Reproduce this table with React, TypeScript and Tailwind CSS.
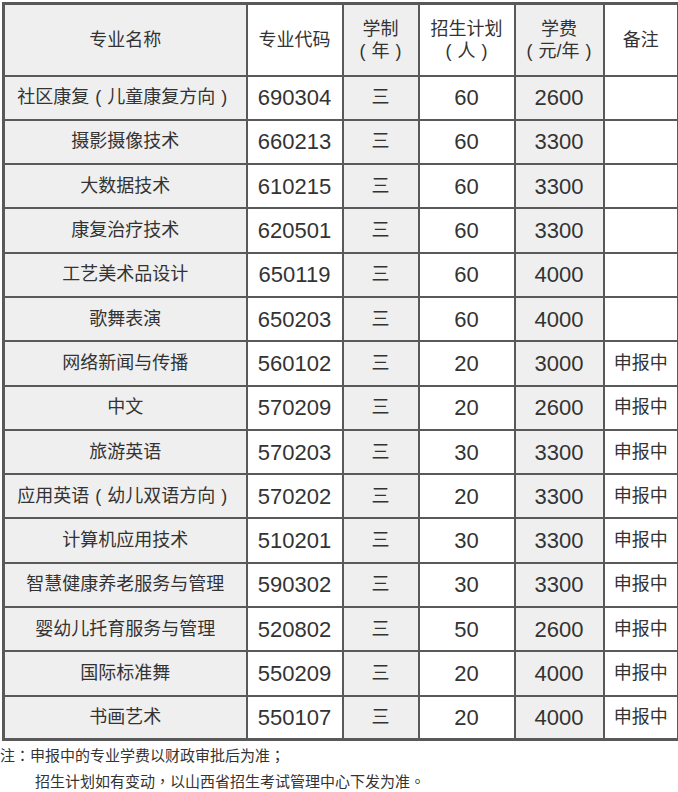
const rows: [string, string, string, string, string, string][] = [
  ["社区康复（儿童康复方向）", "690304", "三", "60", "2600", ""],
  ["摄影摄像技术", "660213", "三", "60", "3300", ""],
  ["大数据技术", "610215", "三", "60", "3300", ""],
  ["康复治疗技术", "620501", "三", "60", "3300", ""],
  ["工艺美术品设计", "650119", "三", "60", "4000", ""],
  ["歌舞表演", "650203", "三", "60", "4000", ""],
  ["网络新闻与传播", "560102", "三", "20", "3000", "申报中"],
  ["中文", "570209", "三", "20", "2600", "申报中"],
  ["旅游英语", "570203", "三", "30", "3300", "申报中"],
  ["应用英语（幼儿双语方向）", "570202", "三", "20", "3300", "申报中"],
  ["计算机应用技术", "510201", "三", "30", "3300", "申报中"],
  ["智慧健康养老服务与管理", "590302", "三", "30", "3300", "申报中"],
  ["婴幼儿托育服务与管理", "520802", "三", "50", "2600", "申报中"],
  ["国际标准舞", "550209", "三", "20", "4000", "申报中"],
  ["书画艺术", "550107", "三", "20", "4000", "申报中"],
];

const cell = "border-2 border-[#595959] text-center align-middle p-0";
const grey = "bg-[#efefef]";

// full-width punctuation sits centred in its box in the reference
function Txt({ s }: { s: string }) {
  const parts = s.split(/([（）：；，。])/);
  return (
    <>
      {parts.map((p, i) => {
        if (p === "（" || p === "）")
          return (
            <span key={i} className="inline-block w-[1em] text-center">
              {p === "（" ? "(" : ")"}
            </span>
          );
        if (/^[：；，。]$/.test(p))
          return (
            <span key={i} style={{ fontFamily: '"Noto Sans CJK TC", sans-serif' }}>
              {p}
            </span>
          );
        return p;
      })}
    </>
  );
}

export default function App() {
  return (
    <div
      className="w-[678px] h-[792px] overflow-hidden bg-white text-[#333] pt-[2px] pl-[2px]"
      style={{ fontFamily: '"Liberation Sans", "Noto Sans CJK SC", sans-serif' }}
    >
      <table className="border-collapse table-fixed w-[675px] border-[3px] border-[#595959]">
        <colgroup>
          <col className="w-[243px]" />
          <col className="w-[96px]" />
          <col className="w-[76px]" />
          <col className="w-[96px]" />
          <col className="w-[89px]" />
          <col className="w-[75px]" />
        </colgroup>
        <thead>
          <tr className="h-[72px] text-[18px] leading-[22px]">
            <th className={`${cell} ${grey} font-normal`}>专业名称</th>
            <th className={`${cell} font-normal`}>专业代码</th>
            <th className={`${cell} ${grey} font-normal`}>
              学制
              <br />
              <Txt s="（年）" />
            </th>
            <th className={`${cell} font-normal`}>
              招生计划
              <br />
              <Txt s="（人）" />
            </th>
            <th className={`${cell} ${grey} font-normal`}>
              学费
              <br />
              <Txt s="（元/年）" />
            </th>
            <th className={`${cell} font-normal`}>备注</th>
          </tr>
        </thead>
        <tbody>
          {rows.map((r) => (
            <tr key={r[1]} className="h-[44.3px]">
              <td className={`${cell} ${grey} text-[18px]`}>
                <Txt s={r[0]} />
              </td>
              <td className={`${cell} text-[22px]`}>{r[1]}</td>
              <td className={`${cell} ${grey} text-[18px]`}>{r[2]}</td>
              <td className={`${cell} text-[22px]`}>{r[3]}</td>
              <td className={`${cell} ${grey} text-[22px]`}>{r[4]}</td>
              <td className={`${cell} text-[18px]`}>{r[5]}</td>
            </tr>
          ))}
        </tbody>
      </table>
      <div className="text-[15px] text-[#333] leading-[25px] mt-[1px] -ml-[2px]">
        <p>
          <Txt s="注：申报中的专业学费以财政审批后为准；" />
        </p>
        <p className="pl-[35px]">
          <Txt s="招生计划如有变动，以山西省招生考试管理中心下发为准。" />
        </p>
      </div>
    </div>
  );
}
